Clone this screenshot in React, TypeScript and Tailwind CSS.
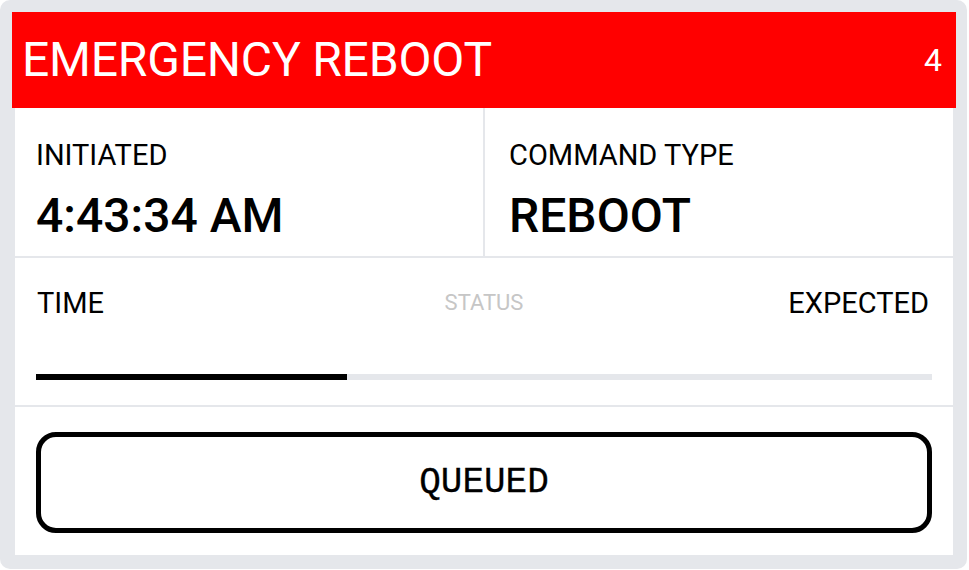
const progress = 34.7;

function Label({ children }: { children: React.ReactNode }) {
  return <div className="text-[29px] leading-[32px] text-black">{children}</div>;
}

function Value({ children }: { children: React.ReactNode }) {
  return <div className="mt-[21px] text-[48px] leading-[48px] font-medium text-black">{children}</div>;
}

export default function App() {
  return (
    <div className="w-[969px] h-[570px] bg-white" style={{ fontFamily: "Roboto, 'Liberation Sans', sans-serif" }}>
      <div className="w-[967px] h-[569px] rounded-[10px] bg-[#e5e7eb] pt-[12px] pl-[12px] pr-[11px] pb-[14px] flex flex-col">
        {/* header */}
        <div className="h-[96px] bg-[#ff0000] flex items-center justify-between pl-[10px] pr-[14px] text-white">
          <h1 className="text-[48px] leading-[48px] font-normal tracking-[-0.2px]">EMERGENCY REBOOT</h1>
          <span className="text-[32px] leading-[32px]">4</span>
        </div>

        <div className="mx-[3px] flex-1 flex flex-col gap-[2px]">
          {/* initiated / command */}
          <div className="h-[148px] grid grid-cols-2 gap-[2px]">
            <div className="bg-white pl-[21px] pt-[31px]">
              <Label>INITIATED</Label>
              <Value>4:43:34 AM</Value>
            </div>
            <div className="bg-white pl-[24px] pt-[31px]">
              <Label>COMMAND TYPE</Label>
              <Value>REBOOT</Value>
            </div>
          </div>

          {/* progress */}
          <div className="h-[147px] bg-white px-[21px] pt-[29px]">
            <div className="flex items-start justify-between">
              <span className="w-[200px] text-[29px] leading-[32px] pl-[1px]">TIME</span>
              <span className="text-[22px] leading-[32px] text-[#c6c6c6]">STATUS</span>
              <span className="w-[200px] text-right text-[29px] leading-[32px] pr-[3px]">EXPECTED</span>
            </div>
            <div className="mt-[55px] h-[6px] bg-[#e5e7eb]">
              <div className="h-full bg-black" style={{ width: `${progress}%` }} />
            </div>
          </div>

          {/* status button */}
          <div className="flex-1 bg-white px-[21px] pt-[25px]">
            <button
              className="w-full h-[101px] rounded-[20px] border-[5px] border-black bg-white text-[36px] font-normal text-black [-webkit-text-stroke:0.3px_black]"
              style={{ fontFamily: "'Liberation Mono', 'DejaVu Sans Mono', monospace" }}
            >
              QUEUED
            </button>
          </div>
        </div>
      </div>
    </div>
  );
}
